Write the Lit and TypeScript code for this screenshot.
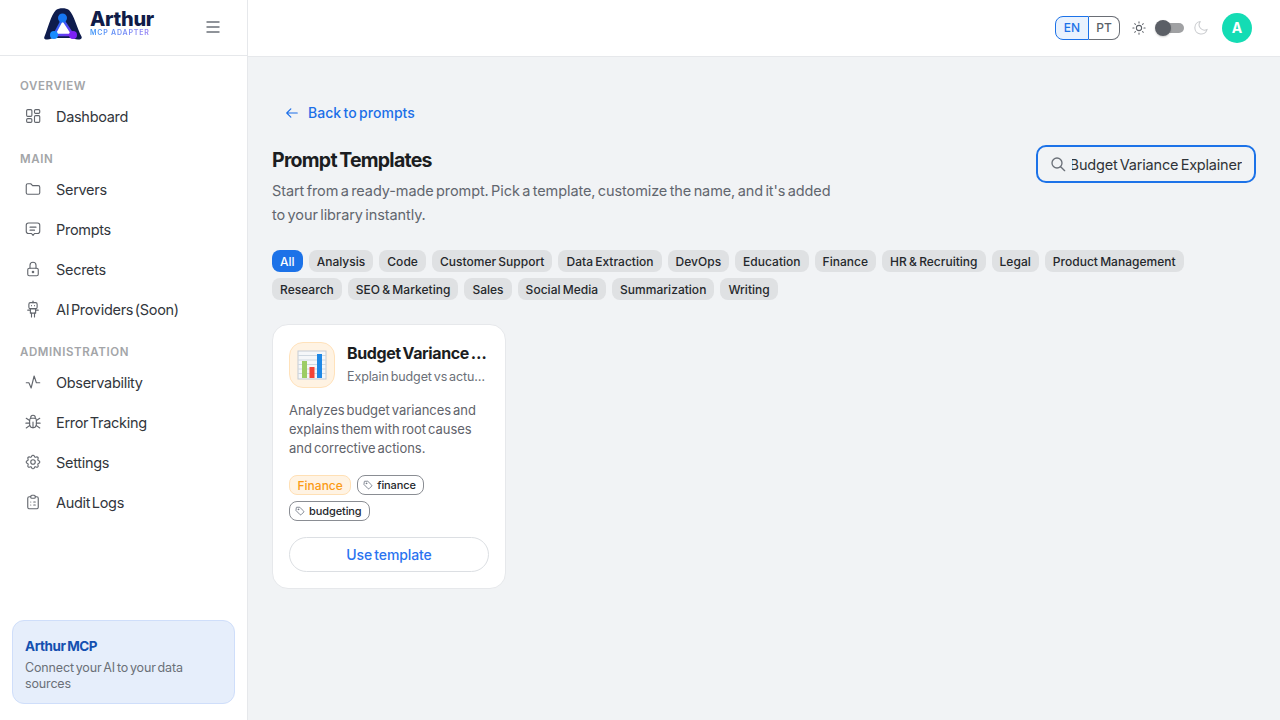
import { LitElement, css, html, svg } from 'lit'
import { customElement } from 'lit/decorators.js'

const ic = (body: unknown, size = 18) => html`<svg class="ic" width="${size}" height="${size}" viewBox="0 0 24 24" fill="none" stroke="currentColor" stroke-width="1.5" stroke-linecap="round" stroke-linejoin="round">${body}</svg>`

const icons = {
  dashboard: svg`<rect x="3.5" y="3.5" width="7" height="9" rx="1.5"/><rect x="14" y="3.5" width="7" height="5" rx="1.5"/><rect x="14" y="11.5" width="7" height="9" rx="1.5"/><rect x="3.5" y="15.5" width="7" height="5" rx="1.5"/>`,
  folder: svg`<path d="M3 7a2 2 0 0 1 2-2h4l2.5 2.5H19a2 2 0 0 1 2 2V17a2 2 0 0 1-2 2H5a2 2 0 0 1-2-2z"/>`,
  message: svg`<path d="M6 4h12a3 3 0 0 1 3 3v8a3 3 0 0 1-3 3h-4l-2 2.5L10 18H6a3 3 0 0 1-3-3V7a3 3 0 0 1 3-3z"/><path d="M8 9.5h8M8 13.5h6"/>`,
  lock: svg`<rect x="5" y="11" width="14" height="10" rx="2"/><path d="M8 11V7a4 4 0 0 1 8 0v4"/><circle cx="12" cy="16" r="1"/>`,
  robot: svg`<path d="M12 1.500v2"/><rect x="6.500" y="3.500" width="11" height="8" rx="2"/><path d="M10 7.500h.01M14 7.500h.01"/><rect x="8.500" y="11.500" width="7" height="6"/><path d="M8.500 13.500H5M15.500 13.500H19M10 17.500v5M14 17.500v5"/>`,
  pulse: svg`<path d="M3 13h3.5l3 7 4-16 3 9H21"/>`,
  bug: svg`<path d="M9 7V6a3 3 0 0 1 6 0v1"/><path d="M7.5 9.5A2.5 2.5 0 0 1 10 7h4a2.5 2.5 0 0 1 2.5 2.5V15a4.5 4.5 0 0 1-9 0z"/><path d="M12 12v7.5M3 7l4.5 3M21 7l-4.500 3M2.500 13.500h5M16.500 13.500h5M3 20l4.800-3.500M21 20l-4.800-3.500"/>`,
  gear: svg`<path d="M10.300 4.300c.4-1.800 3-1.800 3.400 0a1.700 1.700 0 0 0 2.600 1.100c1.500-.9 3.300.8 2.400 2.400a1.700 1.700 0 0 0 1 2.500c1.800.4 1.800 3 0 3.400a1.700 1.700 0 0 0-1 2.600c.9 1.500-.9 3.300-2.400 2.400a1.700 1.700 0 0 0-2.600 1c-.4 1.800-3 1.800-3.400 0a1.700 1.700 0 0 0-2.600-1c-1.500.9-3.300-.9-2.400-2.400a1.700 1.700 0 0 0-1-2.600c-1.800-.4-1.800-3 0-3.400a1.700 1.700 0 0 0 1-2.500c-.9-1.600.9-3.300 2.400-2.400a1.700 1.700 0 0 0 2.600-1.100z"/><circle cx="12" cy="12" r="3"/>`,
  clipboard: svg`<path d="M9 5H7a2 2 0 0 0-2 2v12a2 2 0 0 0 2 2h10a2 2 0 0 0 2-2V7a2 2 0 0 0-2-2h-2"/><rect x="9" y="3" width="6" height="4" rx="1.500"/><path d="M9 12h.01M13 12h2M9 16h.01M13 16h2"/>`,
}

const navGroups = [
  { label: 'OVERVIEW', items: [['Dashboard', icons.dashboard]] },
  { label: 'MAIN', items: [['Servers', icons.folder], ['Prompts', icons.message], ['Secrets', icons.lock], ['AI Providers (Soon)', icons.robot]] },
  { label: 'ADMINISTRATION', items: [['Observability', icons.pulse], ['Error Tracking', icons.bug], ['Settings', icons.gear], ['Audit Logs', icons.clipboard]] },
]

const categories = ['All', 'Analysis', 'Code', 'Customer Support', 'Data Extraction', 'DevOps', 'Education', 'Finance', 'HR & Recruiting', 'Legal', 'Product Management', 'Research', 'SEO & Marketing', 'Sales', 'Social Media', 'Summarization', 'Writing']

const tagIcon = html`<svg width="10" height="10" viewBox="0 0 24 24" fill="none" stroke="#6b7280" stroke-width="2" stroke-linecap="round" stroke-linejoin="round"><path d="M3 4a1 1 0 0 1 1-1h7.500L21 12.500a1.500 1.500 0 0 1 0 2L14.500 21a1.500 1.500 0 0 1-2 0L3 11.500z"/><circle cx="8" cy="8" r="1"/></svg>`

@customElement('app-root')
export class AppRoot extends LitElement {
  render() {
    return html`
      <aside class="side">
        <div class="brand">
          <div class="logo">
            <svg width="40" height="34" viewBox="0 0 40 34">
              <defs>
                <linearGradient id="tri" x1="0" y1="0" x2="1" y2="1"><stop offset="0" stop-color="#1478f5"/><stop offset="1" stop-color="#7c2cf2"/></linearGradient>
              </defs>
              <path d="M1.500 30.500 C5 22 8 9 13 4 C16 1.500 23 1.500 26 4 C31 9 34 22 38.500 30.500 C39.500 33 37 33.500 35 33.500 C32 33.500 30 32 28 32 L11 32 C9 32 7 33.500 4.500 33.500 C2 33.500 .5 33 1.500 30.500 Z" fill="#0e1c4d"/>
              <path d="M19.500 13 L11 29 H30 Z" fill="#fff" stroke="url(#tri)" stroke-width="2.300" stroke-linejoin="round"/>
              <circle cx="19.500" cy="12" r="4.500" fill="#1676f3"/>
              <circle cx="11" cy="29" r="4" fill="#1a8cff"/>
              <circle cx="30" cy="29" r="4" fill="#7c22f5"/>
            </svg>
            <div class="wordmark">
              <span class="arthur">Arthur</span>
              <span class="adapter">MCP ADAPTER</span>
            </div>
          </div>
          <svg class="burger" width="14" height="12" viewBox="0 0 14 12" fill="none" stroke="#6b7078" stroke-width="1.500"><path d="M0.500 1H13.500M0.500 6H13.500M0.500 11H13.500"/></svg>
        </div>
        <nav class="nav">
          ${navGroups.map(g => html`
            <div class="group-label">${g.label}</div>
            ${g.items.map(([name, icon]) => html`<a class="nav-item">${ic(icon)}<span>${name}</span></a>`)}
          `)}
        </nav>
        <div class="promo">
          <div class="promo-title">Arthur MCP</div>
          <div class="promo-text">Connect your AI to your data sources</div>
        </div>
      </aside>
      <div class="right">
        <header class="top">
          <div class="lang"><span class="on">EN</span><span>PT</span></div>
          <svg class="sun" width="14" height="14" viewBox="0 0 24 24" fill="none" stroke="#5d6168" stroke-width="1.800" stroke-linecap="round"><circle cx="12" cy="12" r="4.500"/><path d="M12 1.500v2M12 20.500v2M1.500 12h2M20.500 12h2M4.600 4.600l1.400 1.400M18 18l1.400 1.400M4.600 19.400L6 18M18 6l1.400-1.400"/></svg>
          <div class="toggle"><i></i></div>
          <svg class="moon" width="15" height="15" viewBox="0 0 24 24" fill="none" stroke="#c9cbce" stroke-width="1.700" stroke-linejoin="round"><path d="M21 15A10 10 0 1 1 10 2.500 A8.500 8.500 0 0 0 21 15z"/></svg>
          <div class="avatar">A</div>
        </header>
        <main class="main">
          <a class="back">
            <svg width="14" height="14" viewBox="0 0 24 24" fill="none" stroke="currentColor" stroke-width="2" stroke-linecap="round" stroke-linejoin="round"><path d="M21 12H3M10 5l-7 7 7 7"/></svg>
            Back to prompts
          </a>
          <div class="head">
            <div>
              <h1>Prompt Templates</h1>
              <p>Start from a ready-made prompt. Pick a template, customize the name, and it's added to your library instantly.</p>
            </div>
            <div class="search">
              <svg width="16" height="16" viewBox="0 0 24 24" fill="none" stroke="#6b7078" stroke-width="2" stroke-linecap="round"><circle cx="10.500" cy="10.500" r="7.500"/><path d="M16 16l6 6"/></svg>
              <div class="query"><span>Budget Variance Explainer</span></div>
            </div>
          </div>
          <div class="chips">
            ${categories.map((c, i) => html`<span class="chip ${i === 0 ? 'active' : ''}">${c}</span>`)}
          </div>
          <article class="card">
            <div class="card-top">
              <div class="emoji">
                <svg width="30" height="30" viewBox="0 0 30 30">
                  <rect x="1" y="1" width="28" height="28" fill="#f5f7f9" stroke="#c5ccd3"/>
                  <path d="M1 5.500H29M1 10H29M1 14.500H29M1 19H29M1 23.500H29" stroke="#cfd8e0" stroke-width="1"/>
                  <rect x="5" y="11" width="5" height="17" fill="#9ccc65"/>
                  <rect x="12.500" y="17" width="5" height="11" fill="#f44336"/>
                  <rect x="20" y="4" width="5" height="24" fill="#1e88e5"/>
                </svg>
              </div>
              <div class="titles">
                <div class="card-title">Budget Variance Explainer</div>
                <div class="card-sub">Explain budget vs actuals to stakeholders</div>
              </div>
            </div>
            <p class="desc">Analyzes budget variances and explains them with root causes and corrective actions.</p>
            <div class="tags">
              <span class="tag cat">Finance</span>
              <span class="tag">${tagIcon}finance</span>
              <span class="tag">${tagIcon}budgeting</span>
            </div>
            <button class="use">Use template</button>
          </article>
        </main>
      </div>
    `
  }

  static styles = css`
    :host {
      display: flex;
      width: 1280px;
      height: 720px;
      overflow: hidden;
      font-family: Inter, "Liberation Sans", sans-serif;
      color: #1b1d21;
      background: #f1f3f5;
    }
    .side {
      width: 248px;
      box-sizing: border-box;
      flex: none;
      display: flex;
      flex-direction: column;
      background: #fff;
      border-right: 1px solid #e6e8eb;
    }
    .brand {
      height: 56px;
      box-sizing: border-box;
      flex: none;
      border-bottom: 1px solid #e6e8eb;
      display: flex;
      align-items: center;
      padding: 0 27px 0 43px;
      justify-content: space-between;
    }
    .logo {
      display: flex;
      align-items: center;
      gap: 7px;
      margin-top: -9px;
    }
    .wordmark {
      display: flex;
      flex-direction: column;
    }
    .arthur {
      font-size: 20px;
      line-height: 18px;
      font-weight: 800;
      color: #101c48;
      letter-spacing: -0.300px;
    }
    .adapter {
      font-size: 7px;
      line-height: 7px;
      font-weight: 600;
      letter-spacing: 0.800px;
      margin-top: 1px;
      background: linear-gradient(90deg, #3d95f7, #9d7ff5);
      -webkit-background-clip: text;
      background-clip: text;
      color: transparent;
    }
    .burger {
      margin-top: -1px;
    }
    .nav {
      padding: 21px 0 0;
      display: flex;
      flex-direction: column;
      flex: 1;
    }
    .group-label {
      height: 18px;
      line-height: 18px;
      margin: 0 0 1px 20px;
      font-size: 11.500px;
      font-weight: 600;
      letter-spacing: 0.600px;
      color: #a3a5a8;
    }
    .nav-item + .group-label {
      margin-top: 14px;
    }
    .nav-item {
      height: 40px;
      display: flex;
      align-items: center;
      gap: 14px;
      padding-left: 24px;
      font-size: 14.500px;
      letter-spacing: -0.300px;
      word-spacing: -2.200px;
      color: #32363c;
    }
    .nav-item .ic {
      color: #62666d;
      flex: none;
    }
    .promo {
      margin: 0 12px 16px;
      height: 84px;
      box-sizing: border-box;
      padding: 16px 12px 0;
      border-radius: 12px;
      background: #e6eefb;
      border: 1px solid #cfdefa;
    }
    .promo-title {
      font-size: 13.500px;
      line-height: 18px;
      font-weight: 700;
      color: #1450b0;
      letter-spacing: -0.450px;
      word-spacing: -1px;
    }
    .promo-text {
      margin-top: 5px;
      font-size: 12.500px;
      line-height: 16px;
      color: #6b7078;
      letter-spacing: -0.150px;
      word-spacing: -1.500px;
    }
    .right {
      flex: 1;
      min-width: 0;
      display: flex;
      flex-direction: column;
    }
    .top {
      height: 57px;
      box-sizing: border-box;
      flex: none;
      background: #fff;
      border-bottom: 1px solid #e6e8eb;
      display: flex;
      align-items: center;
      justify-content: flex-end;
      padding: 0 28px 1px 0;
    }
    .lang {
      display: flex;
      height: 24px;
      margin-right: 12px;
      font-size: 12px;
      font-weight: 500;
      color: #5a5f67;
    }
    .lang span {
      width: 31px;
      box-sizing: border-box;
      display: flex;
      align-items: center;
      justify-content: center;
      border: 1px solid #6a6e75;
      border-left: none;
      border-radius: 0 8px 8px 0;
    }
    .lang .on {
      width: 34px;
      color: #1c72e8;
      background: #e9f2fe;
      border: 1px solid #1c72e8;
      border-radius: 8px 0 0 8px;
    }
    .toggle {
      width: 28px;
      height: 10px;
      margin: 0 10px 0 10px;
      border-radius: 5px;
      background: #a0a1a3;
      position: relative;
    }
    .toggle i {
      position: absolute;
      left: -1px;
      top: -3px;
      width: 16px;
      height: 16px;
      border-radius: 50%;
      background: #5b5f66;
      box-shadow: 0 1px 2px rgba(0, 0, 0, 0.2);
    }
    .avatar {
      width: 30px;
      height: 30px;
      margin-left: 13px;
      border-radius: 50%;
      background: #14dcb4;
      color: #fff;
      font-size: 14px;
      font-weight: 700;
      display: flex;
      align-items: center;
      justify-content: center;
    }
    .main {
      flex: 1;
      padding: 40px 24px 0;
    }
    .back {
      display: flex;
      align-items: center;
      gap: 9px;
      height: 31px;
      padding-left: 13px;
      font-size: 14px;
      font-weight: 500;
      color: #1c6fe8;
      letter-spacing: 0.050px;
      word-spacing: -1.500px;
    }
    .head {
      margin-top: 17px;
      display: flex;
      justify-content: space-between;
      align-items: flex-start;
    }
    h1 {
      margin: 0;
      font-size: 19.500px;
      line-height: 30px;
      font-weight: 700;
      color: #1b1d21;
      letter-spacing: -0.750px;
      word-spacing: -1.500px;
    }
    .head p {
      margin: 4px 0 0;
      width: 565px;
      font-size: 14.500px;
      line-height: 24px;
      color: #61666e;
      letter-spacing: -0.100px;
      word-spacing: -1.500px;
    }
    .search {
      width: 220px;
      height: 38px;
      box-sizing: border-box;
      border: 2px solid #1c72e8;
      border-radius: 10px;
      display: flex;
      align-items: center;
      padding: 0 12px;
      gap: 6px;
      flex: none;
    }
    .query {
      flex: 1;
      min-width: 0;
      overflow: hidden;
      display: flex;
      justify-content: flex-end;
      white-space: nowrap;
      font-size: 14.500px;
      color: #2f3338;
      letter-spacing: -0.200px;
      word-spacing: -1.500px;
    }
    .query span {
      flex: none;
    }
    .chips {
      margin-top: 23px;
      display: flex;
      flex-wrap: wrap;
      gap: 6px;
      width: 940px;
    }
    .chip {
      height: 22px;
      display: flex;
      align-items: center;
      padding: 0 8px;
      border-radius: 8px;
      background: #dfe1e3;
      font-size: 12px;
      font-weight: 500;
      color: #25282c;
      letter-spacing: 0.020px;
      word-spacing: -1px;
    }
    .chip.active {
      background: #1c72e8;
      color: #fff;
    }
    .card {
      margin-top: 24px;
      width: 234px;
      height: 265px;
      box-sizing: border-box;
      background: #fff;
      border: 1px solid #e6e8eb;
      border-radius: 16px;
      padding: 17px 16px 16px;
    }
    .card-top {
      display: flex;
      gap: 12px;
    }
    .emoji {
      width: 46px;
      height: 46px;
      box-sizing: border-box;
      flex: none;
      border-radius: 14px;
      background: #fff3e3;
      border: 1px solid #ffe2bb;
      display: flex;
      align-items: center;
      justify-content: center;
    }
    .titles {
      min-width: 0;
      flex: 1;
      margin-top: -1px;
    }
    .card-title {
      font-size: 16px;
      line-height: 24px;
      font-weight: 700;
      letter-spacing: -0.400px;
      word-spacing: -1.500px;
      color: #1b1d21;
      overflow: hidden;
      white-space: nowrap;
      text-overflow: ellipsis;
    }
    .card-sub {
      margin-top: 2px;
      font-size: 12.500px;
      line-height: 20px;
      color: #6b7078;
      letter-spacing: -0.100px;
      word-spacing: -1.500px;
      overflow: hidden;
      white-space: nowrap;
      text-overflow: ellipsis;
    }
    .desc {
      margin: 13px 0 0;
      font-size: 13px;
      line-height: 19px;
      color: #5f636b;
      letter-spacing: -0.050px;
      word-spacing: -1.500px;
    }
    .tags {
      margin-top: 17px;
      display: flex;
      flex-wrap: wrap;
      gap: 6px;
    }
    .tag {
      height: 20px;
      box-sizing: border-box;
      display: flex;
      align-items: center;
      gap: 4px;
      padding: 0 7px 0 5px;
      border: 1px solid #8a8d93;
      border-radius: 8px;
      font-size: 11px;
      font-weight: 500;
      letter-spacing: -0.100px;
      color: #25282c;
    }
    .tag.cat {
      padding: 0 7.500px;
      background: #fff3e3;
      border-color: #ffe0b5;
      color: #fb9a14;
      font-size: 12px;
      letter-spacing: 0;
    }
    .use {
      margin-top: 16px;
      width: 100%;
      height: 35px;
      background: #fff;
      border: 1px solid #dcdfe3;
      border-radius: 18px;
      font: inherit;
      font-size: 14px;
      font-weight: 500;
      color: #2a73f0;
      letter-spacing: -0.100px;
      word-spacing: -1.500px;
    }
  `
}

declare global {
  interface HTMLElementTagNameMap {
    'app-root': AppRoot
  }
}
